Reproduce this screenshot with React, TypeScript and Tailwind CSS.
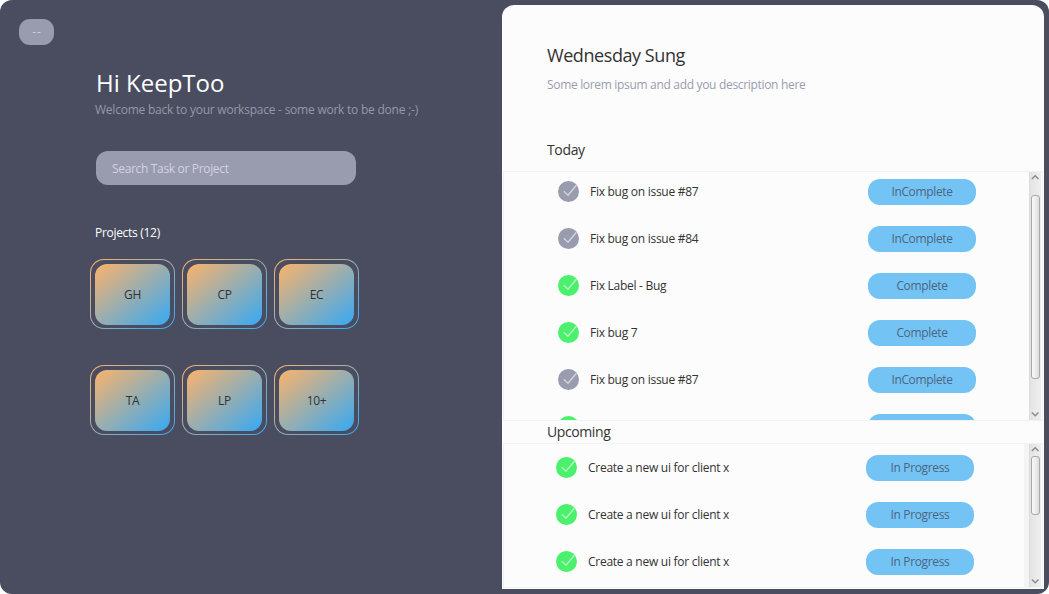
const font = 'font-["Open_Sans","Noto_Sans",sans-serif]';

const projects = ["GH", "CP", "EC", "TA", "LP", "10+"];

type Task = { title: string; status: string; done: boolean };

const today: Task[] = [
  { title: "Fix bug on issue #87", status: "InComplete", done: false },
  { title: "Fix bug on issue #84", status: "InComplete", done: false },
  { title: "Fix Label - Bug", status: "Complete", done: true },
  { title: "Fix bug 7", status: "Complete", done: true },
  { title: "Fix bug on issue #87", status: "InComplete", done: false },
  { title: "", status: "", done: true },
];

const upcoming: Task[] = [
  { title: "Create a new ui for client x", status: "In Progress", done: true },
  { title: "Create a new ui for client x", status: "In Progress", done: true },
  { title: "Create a new ui for client x", status: "In Progress", done: true },
];

function Check({ done }: { done: boolean }) {
  return (
    <svg width="22" height="22" viewBox="0 0 22 22" className="shrink-0">
      <circle cx="10.5" cy="10.5" r="10.5" fill={done ? "#4bf06c" : "#999bae"} />
      <path
        d="M5.8 10.2 L10 14.2 L18.4 4.2"
        fill="none"
        stroke={done ? "#b5f8c1" : "#d3d4dd"}
        strokeWidth="1.4"
      />
    </svg>
  );
}

function TaskRow({ task }: { task: Task }) {
  return (
    <li className="mb-[21px] flex h-[26px] items-center">
      <Check done={task.done} />
      <span className="ml-[10px] w-[278px] whitespace-nowrap text-[12px] leading-[26px] tracking-[-0.27px] text-[#333]">
        {task.title}
      </span>
      <span className="h-[26px] w-[108px] rounded-[12px] bg-[#73c4f5] text-center text-[12px] leading-[26px] tracking-[-0.35px] text-[#4d6580]">
        {task.status}
      </span>
    </li>
  );
}

function Chevron({ down = false }: { down?: boolean }) {
  return (
    <svg width="12" height="12" viewBox="0 0 12 12" className="shrink-0">
      <path
        d={down ? "M1.9 4.5 L5.2 7.8 L8.5 4.5" : "M1.9 7 L5.2 3.7 L8.5 7"}
        fill="none"
        stroke="#8c8c8c"
        strokeWidth="1.5"
      />
    </svg>
  );
}

function ScrollBar({ thumb }: { thumb: string }) {
  return (
    <div className="flex w-3 shrink-0 flex-col items-center justify-between border-l border-[#dcdcdc] bg-gradient-to-r from-[#e3e3e3] to-[#efefef]">
      <div className="flex flex-col items-center">
        <Chevron />
        <div
          className={`w-[9px] rounded-[3px] border border-[#a9a9a9] bg-gradient-to-r from-[#fafafa] via-[#ededed] to-[#dcdcdc] ${thumb}`}
        />
      </div>
      <Chevron down />
    </div>
  );
}

export default function App() {
  return (
    <div className={`flex h-[594px] w-[1049px] overflow-hidden rounded-[12px] bg-[#494d5f] ${font}`}>
      <aside className="flex w-[502px] shrink-0 flex-col items-start">
        <button className="mt-[19px] ml-[19px] h-[26px] w-[35px] rounded-[11px] bg-[#999bae] pl-px text-[12px] leading-[26px] tracking-[1px] text-[#d0cfe0]">
          --
        </button>
        <h1 className="mt-[20px] ml-[96px] h-[36px] whitespace-nowrap text-[24px] leading-[36px] text-white">
          Hi KeepToo
        </h1>
        <p className="ml-[95px] h-[18px] whitespace-nowrap text-[12px] leading-[18px] tracking-[-0.23px] text-[#9597ab]">
          Welcome back to your workspace - some work to be done ;-)
        </p>
        <input
          placeholder="Search Task or Project"
          className="mt-[32px] ml-[96px] h-[34px] w-[260px] rounded-[12px] bg-[#999bae] px-4 pt-px text-[12px] tracking-[-0.33px] text-white outline-none placeholder:text-[#d5d0e5]"
        />
        <h2 className="mt-[38px] ml-[95px] h-[20px] whitespace-nowrap text-[12px] leading-[20px] tracking-[-0.3px] text-white">
          Projects (12)
        </h2>
        <div className="mt-[16px] ml-[90px] grid grid-cols-[85px_85px_85px] gap-x-[7px] gap-y-[36px]">
          {projects.map((name) => (
            <div
              key={name}
              className="h-[70px] rounded-[14px] bg-[linear-gradient(to_bottom_right,#fbb36b,#36a9f4)] p-px"
            >
              <div className="h-full rounded-[13px] bg-[#494d5f] px-1 pt-1 pb-[3px]">
                <div className="flex h-full items-center justify-center rounded-[12px] bg-[linear-gradient(to_bottom_right,#fbb36b,#36a9f4)] text-[12px] tracking-[-0.3px] text-[#333]">
                  {name}
                </div>
              </div>
            </div>
          ))}
        </div>
      </aside>

      <main className="mt-[5px] flex h-[584px] w-[542px] flex-col overflow-hidden rounded-t-[12px] bg-[#fcfcfc]">
        <h2 className="mt-[36px] ml-[45px] h-[29px] whitespace-nowrap text-[18px] leading-[28px] tracking-[-0.43px] text-[#333]">
          Wednesday Sung
        </h2>
        <p className="mt-[6px] ml-[45px] h-[18px] whitespace-nowrap text-[12px] leading-[18px] tracking-[-0.32px] text-[#9a9cb0]">
          Some lorem ipsum and add you description here
        </p>
        <h3 className="mt-[46px] ml-[45px] h-[20px] whitespace-nowrap text-[14px] leading-[20px] tracking-[-0.35px] text-[#333]">
          Today
        </h3>
        <section className="mx-px mt-[11px] flex h-[250px] shrink-0 border border-[#f2f2f2] pr-px">
          <ul className="w-[525px] overflow-hidden pt-[7px] pl-[54px]">
            {today.map((task, i) => (
              <TaskRow key={i} task={task} />
            ))}
          </ul>
          <ScrollBar thumb="mt-[11px] h-[184px]" />
        </section>
        <h3 className="ml-[45px] h-[22px] whitespace-nowrap text-[14px] leading-[22px] tracking-[-0.4px] text-[#333]">
          Upcoming
        </h3>
        <section className="mx-px flex h-[145px] shrink-0 border border-[#f2f2f2] pr-px">
          <ul className="w-[520px] overflow-hidden pt-[11px] pl-[52px]">
            {upcoming.map((task, i) => (
              <TaskRow key={i} task={task} />
            ))}
          </ul>
          <div className="w-[5px] bg-[#f4f4f4]" />
          <ScrollBar thumb="h-[59px]" />
        </section>
      </main>
    </div>
  );
}
